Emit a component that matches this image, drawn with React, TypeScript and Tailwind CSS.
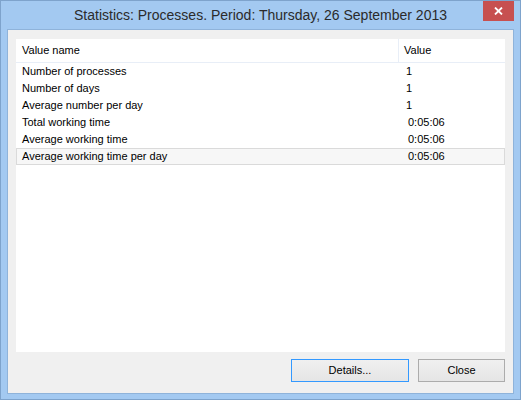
import React from 'react';

const ROWS = [
  { name: 'Number of processes', value: '1', pad: 'pl-[7px]' },
  { name: 'Number of days', value: '1', pad: 'pl-[7px]' },
  { name: 'Average number per day', value: '1', pad: 'pl-[7px]' },
  { name: 'Total working time', value: '0:05:06', pad: 'pl-[9px]' },
  { name: 'Average working time', value: '0:05:06', pad: 'pl-[9px]' },
  { name: 'Average working time per day', value: '0:05:06', pad: 'pl-[9px]' },
];

export default function App() {
  return (
    <div className="w-[521px] h-[400px] bg-[#a3c9f1] border border-[#7ea3cc] flex flex-col font-['Liberation_Sans',sans-serif]">
      {/* Title bar */}
      <div className="relative h-[28px] shrink-0 flex items-center justify-center">
        <span className="text-[14px] text-[#2b2b2b] pt-[1px]">
          Statistics: Processes. Period: Thursday, 26 September 2013
        </span>
        <button className="absolute top-0 right-[6px] w-[31px] h-[20px] bg-[#c75050] flex items-center justify-center">
          <svg width="9" height="8" viewBox="0 0 9 8">
            <path d="M1 0.5 L8 7.5 M8 0.5 L1 7.5" stroke="#fff" strokeWidth="1.8" />
          </svg>
        </button>
      </div>

      {/* Client area */}
      <div className="flex-1 mx-[6px] mb-[5px] border border-[#8fb3da] bg-[#f0f0f0] flex flex-col pt-[9px] px-[8px] pb-[11px]">
        <div className="flex-1 bg-white flex flex-col text-[11px] text-black">
          <div className="h-[24px] flex border-b border-[#e8eef7]">
            <div className="w-[383px] pl-[6px] flex items-center border-r border-[#e8eef7]">Value name</div>
            <div className="flex-1 pl-[5px] flex items-center">Value</div>
          </div>
          {ROWS.map((r, i) => (
            <div
              key={r.name}
              className={`h-[17px] flex items-center border ${
                i === ROWS.length - 1 ? 'bg-[#f7f7f7] border-[#dadada]' : 'border-transparent'
              }`}
            >
              <div className="w-[382px] pl-[5px]">{r.name}</div>
              <div className={`flex-1 ${r.pad}`}>{r.value}</div>
            </div>
          ))}
        </div>

        <div className="flex justify-end gap-[9px] mt-[7px] text-[11px] text-black">
          <button className="w-[118px] h-[23px] border border-[#3399ff] bg-gradient-to-b from-[#f0f0f0] to-[#e5e5e5]">
            Details...
          </button>
          <button className="w-[87px] h-[23px] border border-[#acacac] bg-gradient-to-b from-[#f0f0f0] to-[#e5e5e5]">
            Close
          </button>
        </div>
      </div>
    </div>
  );
}
